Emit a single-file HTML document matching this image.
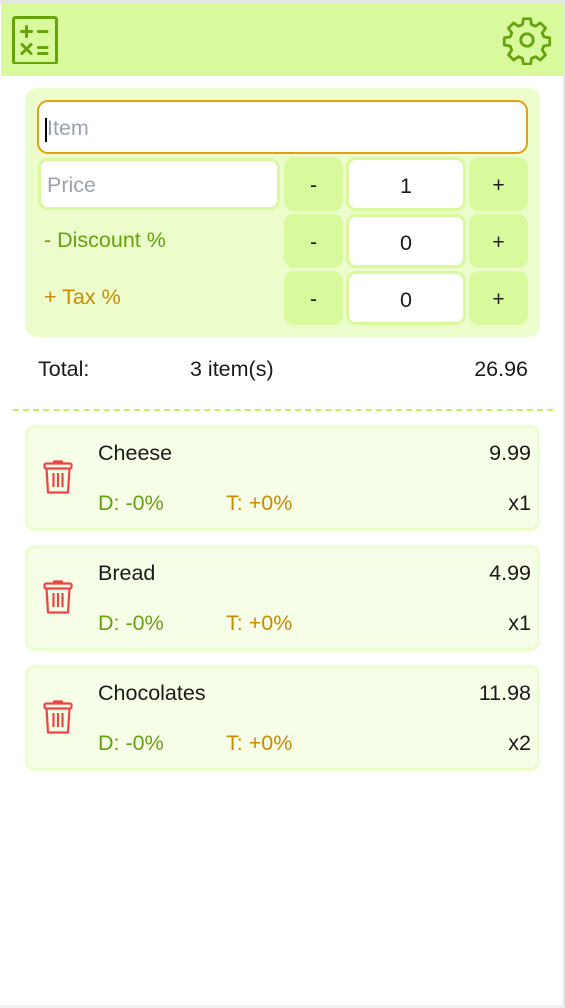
<!DOCTYPE html>
<html><head><meta charset="utf-8"><style>
*{box-sizing:border-box;margin:0;padding:0}
body{width:565px;height:1008px;background:#fff;font-family:"Segoe UI","Liberation Sans",sans-serif;color:#1a1a1a;position:relative;overflow:hidden;font-size:21.5px}
.frame{position:absolute;left:0;top:0;width:565px;height:1008px;border-top:3px solid #e5e5e5;border-right:2px solid #e5e5e5;border-bottom:3px solid #eee}
.hdr{position:absolute;left:1px;top:3px;width:562px;height:73px;background:#d9f99d}
.abs{position:absolute}
.panel{left:25px;top:88px;width:515px;height:249px;background:#ecfccb;border-radius:12px}
.inp{background:#fff;border:3px solid #d9f99d;border-radius:10px}
.btn{background:#d9f99d;border-radius:10px;text-align:center;font-size:21px;line-height:58px;height:54px;width:59px}
.q{width:120px;height:54px;text-align:center;line-height:52px;font-size:21.5px}
.card{left:25px;width:515px;height:106px;background:#f7fee7;border:3px solid #ecfccb;border-radius:10px}
.g{color:#65a30d}.o{color:#ca8a04}
</style></head><body>
<div class="frame"></div>
<div class="hdr"></div>
<svg class="abs" style="left:12px;top:16px" width="48" height="48" viewBox="0 0 48 48" fill="none" stroke="#65a30d" stroke-width="3" stroke-linecap="round"><rect x="1.5" y="1.5" width="43" height="46" rx="2"/><path d="M9.5 15.5h10M14.5 10.5v10M26.5 15.5h8.5M10 28.5l9 9M19 28.5l-9 9M26.5 31.5h8.5M26.5 37.5h8.5"/></svg>
<svg class="abs" style="left:502px;top:15px" width="50" height="50" viewBox="0 0 24 24" fill="none" stroke="#65a30d" stroke-width="1.35" stroke-linejoin="round"><path d="M10.3 1.8h3.4l.5 2.8 1.9.8 2.3-1.6 2.5 2.5-1.6 2.3.8 1.9 2.8.5v3.4l-2.8.5-.8 1.9 1.6 2.3-2.5 2.5-2.3-1.6-1.9.8-.5 2.8h-3.4l-.5-2.8-1.9-.8-2.3 1.6-2.5-2.5 1.6-2.3-.8-1.9-2.8-.5v-3.4l2.8-.5.8-1.9-1.6-2.3 2.5-2.5 2.3 1.6 1.9-.8z"/><circle cx="12" cy="12" r="3"/></svg>

<div class="abs panel"></div>
<div class="abs" style="left:37px;top:100px;width:491px;height:54px;background:#fff;border:2.5px solid #e5a00d;border-radius:11px"></div>
<div class="abs" style="left:45px;top:118px;width:2px;height:24px;background:#000"></div>
<div class="abs" style="left:47px;top:116px;color:#9ca3af">Item</div>
<div class="abs inp" style="left:38px;top:158px;width:242px;height:52px"></div>
<div class="abs" style="left:47px;top:173px;color:#9ca3af">Price</div>
<div class="abs g" style="left:44px;top:228px">- Discount %</div>
<div class="abs o" style="left:44px;top:285px">+ Tax %</div>

<div class="abs btn" style="left:284px;top:157px">-</div>
<div class="abs inp q" style="left:346px;top:157px">1</div>
<div class="abs btn" style="left:469px;top:157px">+</div>
<div class="abs btn" style="left:284px;top:214px">-</div>
<div class="abs inp q" style="left:346px;top:214px">0</div>
<div class="abs btn" style="left:469px;top:214px">+</div>
<div class="abs btn" style="left:284px;top:271px">-</div>
<div class="abs inp q" style="left:346px;top:271px">0</div>
<div class="abs btn" style="left:469px;top:271px">+</div>

<div class="abs" style="left:38px;top:357px">Total:</div>
<div class="abs" style="left:190px;top:357px">3 item(s)</div>
<div class="abs" style="right:37px;top:357px">26.96</div>
<div class="abs" style="left:13px;top:409px;width:540px;border-top:2px dashed #bef264"></div>

<div class="abs card" style="top:425px"></div>
<div class="abs card" style="top:545px"></div>
<div class="abs card" style="top:665px"></div>

<svg width="0" height="0" style="position:absolute"><defs><g id="t" fill="none" stroke="#ef4444" stroke-width="2.2" stroke-linejoin="round"><rect x="1.5" y="4.5" width="27" height="5" rx="1.5"/><path d="M11 4.5v-2h8v2M3.5 9.5l1.5 24h20l1.5-24M10.5 14v14M15 14v14M19.5 14v14"/></g></defs></svg>

<svg class="abs" style="left:43px;top:459px" width="31" height="36"><use href="#t"/></svg>
<div class="abs" style="left:98px;top:441px">Cheese</div>
<div class="abs" style="right:34px;top:441px">9.99</div>
<div class="abs g" style="left:98px;top:491px">D: -0%</div>
<div class="abs o" style="left:226px;top:491px">T: +0%</div>
<div class="abs" style="right:34px;top:491px">x1</div>

<svg class="abs" style="left:43px;top:579px" width="31" height="36"><use href="#t"/></svg>
<div class="abs" style="left:98px;top:561px">Bread</div>
<div class="abs" style="right:34px;top:561px">4.99</div>
<div class="abs g" style="left:98px;top:611px">D: -0%</div>
<div class="abs o" style="left:226px;top:611px">T: +0%</div>
<div class="abs" style="right:34px;top:611px">x1</div>

<svg class="abs" style="left:43px;top:699px" width="31" height="36"><use href="#t"/></svg>
<div class="abs" style="left:98px;top:681px">Chocolates</div>
<div class="abs" style="right:34px;top:681px">11.98</div>
<div class="abs g" style="left:98px;top:731px">D: -0%</div>
<div class="abs o" style="left:226px;top:731px">T: +0%</div>
<div class="abs" style="right:34px;top:731px">x2</div>
</body></html>
